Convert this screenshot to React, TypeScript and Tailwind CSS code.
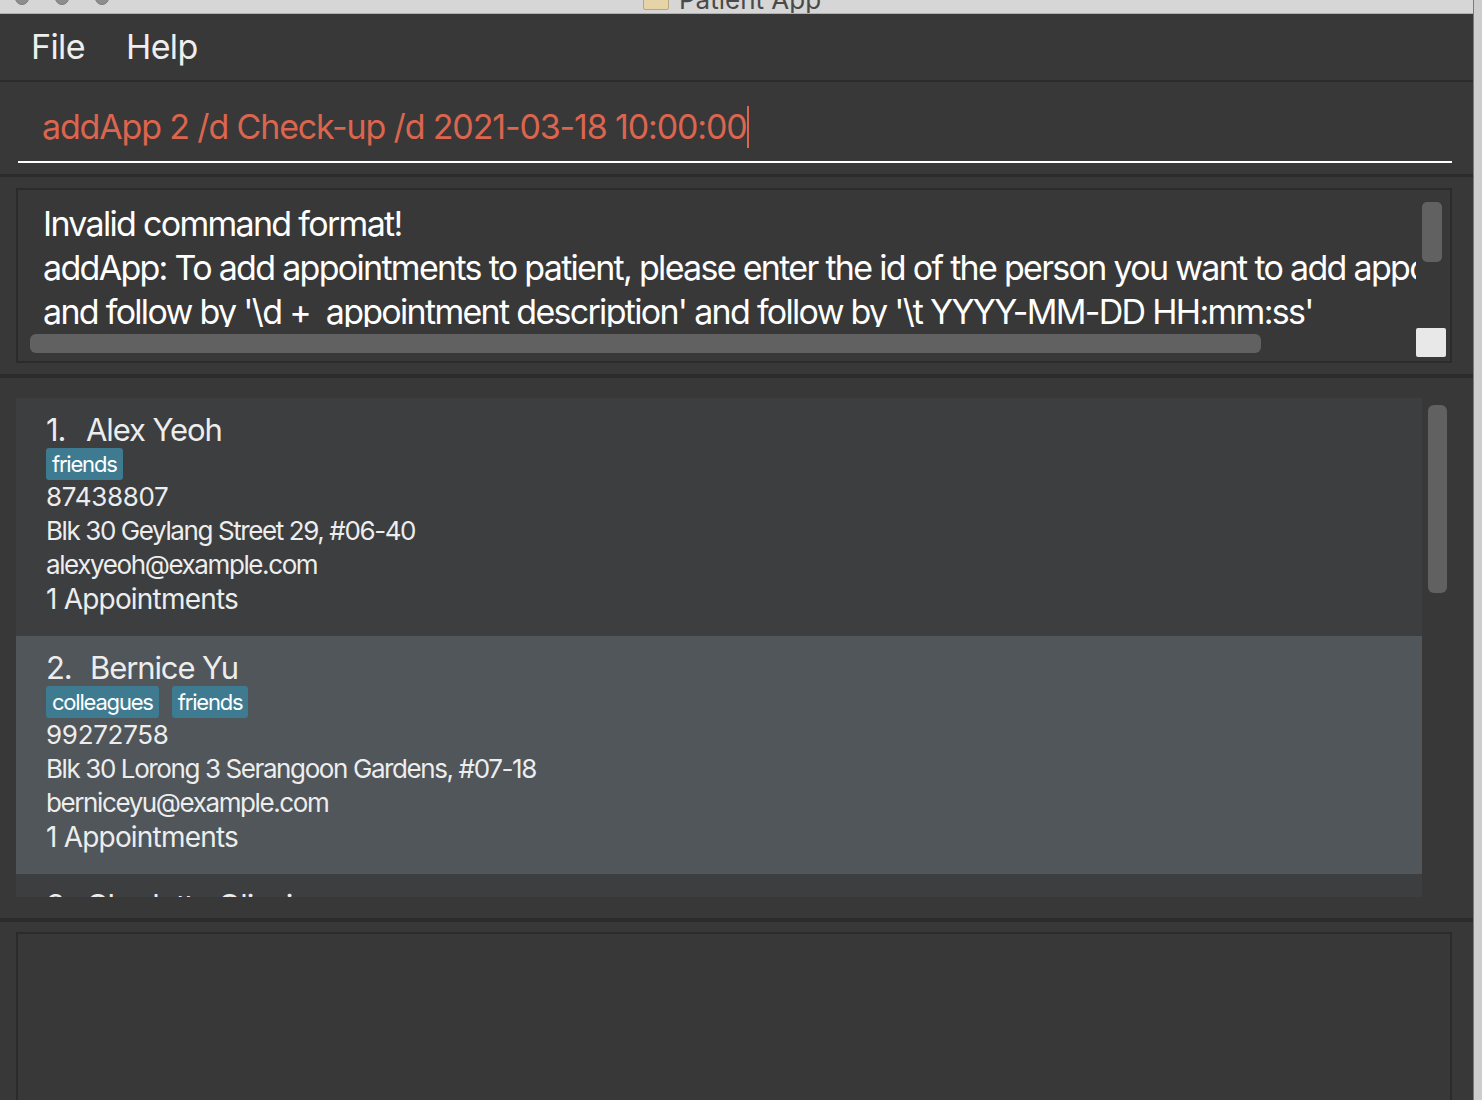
import React from "react";

type Person = {
  name: string;
  tags: string[];
  phone: string;
  address: string;
  email: string;
  appointments: number;
};

const people: Person[] = [
  {
    name: "Alex Yeoh",
    tags: ["friends"],
    phone: "87438807",
    address: "Blk 30 Geylang Street 29, #06-40",
    email: "alexyeoh@example.com",
    appointments: 1,
  },
  {
    name: "Bernice Yu",
    tags: ["colleagues", "friends"],
    phone: "99272758",
    address: "Blk 30 Lorong 3 Serangoon Gardens, #07-18",
    email: "berniceyu@example.com",
    appointments: 1,
  },
  {
    name: "Charlotte Oliveiro",
    tags: ["neighbours"],
    phone: "93210283",
    address: "Blk 11 Ang Mo Kio Street 74, #11-04",
    email: "charlotte@example.com",
    appointments: 0,
  },
];

const PersonCard: React.FC<{ person: Person; index: number; selected?: boolean }> = ({
  person,
  index,
  selected,
}) => {
  return (
    <div
      className={
        "shrink-0 h-[238px] pl-[30px] pt-[12px] text-[#ededed] " +
        (selected ? "bg-[#50565a] tracking-[-1.4px]" : "bg-[#3c3e40] tracking-[-1.4px]")
      }
    >
      <div className="h-[38px] flex items-center text-[31px] leading-none tracking-[-1.1px]">
        <span className={selected ? "w-[44px]" : "w-[40px]"}>{index}.</span>
        <span>{person.name}</span>
      </div>
      <div className="h-[32px] flex gap-[13px]">
        {person.tags.map((t) => (
          <span
            key={t}
            className="h-[32px] px-[6px] flex items-center rounded-[3px] bg-[#3e7b91] text-white text-[22px] tracking-[-1.2px]"
          >
            {t}
          </span>
        ))}
      </div>
      <div className="text-[26px] leading-[34px]">
        <div className="tracking-[-0.3px]">{person.phone}</div>
        <div>{person.address}</div>
        <div>{person.email}</div>
        <div className="text-[28px] leading-[35px] tracking-[-0.8px]">{person.appointments} Appointments</div>
      </div>
    </div>
  );
};

const App: React.FC = () => {
  return (
    <div
      className="w-[1482px] h-[1100px] flex bg-[#cdcdcd] overflow-hidden"
      style={{ fontFamily: "Inter, 'Noto Sans', sans-serif" }}
    >
      <div className="w-[1474px] h-full flex flex-col border-r border-[#7a7a7a] bg-[#383838]">
        {/* title bar, mostly cut off */}
        <div className="h-[14px] shrink-0 flex bg-[#d6d6d6] border-b border-[#b0b0b0] overflow-hidden">
          <div className="flex gap-[26px] pl-[15px] -mt-[9px]">
            <span className="w-[14px] h-[14px] rounded-full bg-[#8e8e8e] border border-[#7a7a7a]" />
            <span className="w-[14px] h-[14px] rounded-full bg-[#8e8e8e] border border-[#7a7a7a]" />
            <span className="w-[14px] h-[14px] rounded-full bg-[#8e8e8e] border border-[#7a7a7a]" />
          </div>
          <div className="ml-[534px] -mt-[13px] flex items-center gap-[10px]">
            <span className="w-[26px] h-[20px] rounded-[2px] bg-[#e6d3a8] border border-[#bba57a]" />
            <span className="text-[26px] text-[#4a4a4a] leading-none">Patient App</span>
          </div>
        </div>

        {/* menu bar */}
        <div className="h-[68px] shrink-0 flex items-center gap-[41px] pl-[31px] pb-[2px] text-[34px] text-[#eeeeee] tracking-[-0.6px] border-b-2 border-[#2b2b2b]">
          <span>File</span>
          <span>Help</span>
        </div>

        {/* command box */}
        <div className="h-[95px] shrink-0 pl-[18px] pr-[21px] border-b-[3px] border-[#2b2b2b]">
          <div className="h-[81px] flex items-center pl-[24px] pt-[10px] border-b-2 border-white text-[34px] text-[#db654e] tracking-[-1.15px]">
            <span>addApp 2 /d Check-up /d 2021-03-18 10:00:00</span>
            <span className="w-[2px] h-[42px] bg-[#db654e]" />
          </div>
        </div>

        {/* result display */}
        <div className="h-[201px] shrink-0 pl-[16px] pr-[21px] pt-[11px] border-b-[4px] border-[#2b2b2b]">
          <div className="h-[175px] flex flex-col border-2 border-[#2b2b2b]">
            <div className="h-[137px] flex">
              <div className="flex-1 overflow-hidden pl-[25px] pt-[12px] text-[34px] leading-[44px] text-white whitespace-nowrap tracking-[-1.7px]">
                <div>Invalid command format!</div>
                <div>
                  addApp: To add appointments to patient, please enter the id of the person you want to add appointments to
                </div>
                <div>and follow by '\d +&nbsp; appointment description' and follow by '\t YYYY-MM-DD HH:mm:ss'</div>
              </div>
              <div className="w-[34px] pl-[6px] pt-[12px]">
                <div className="w-[20px] h-[60px] rounded-[5px] bg-[#616161]" />
              </div>
            </div>
            <div className="h-[34px] flex">
              <div className="ml-[12px] mt-[7px] w-[1231px] h-[19px] rounded-[6px] bg-[#616161]" />
              <div className="flex-1" />
              <div className="mt-[1px] mr-[4px] w-[30px] h-[29px] rounded-[2px] bg-[#e8e8e8]" />
            </div>
          </div>
        </div>

        {/* person list */}
        <div className="h-[544px] shrink-0 pt-[20px] pl-[16px] pr-[21px] border-b-[4px] border-[#2b2b2b]">
          <div className="flex">
            <div className="w-[1406px] h-[499px] flex flex-col overflow-hidden bg-[#3c3e40]">
              {people.map((p, i) => (
                <PersonCard key={p.name} person={p} index={i + 1} selected={i === 1} />
              ))}
            </div>
            <div className="pl-[6px] pt-[7px]">
              <div className="w-[19px] h-[188px] rounded-[6px] bg-[#616161]" />
            </div>
          </div>
        </div>

        {/* status / empty panel */}
        <div className="flex-1 pl-[16px] pr-[21px] pt-[10px]">
          <div className="h-full border-2 border-b-0 border-[#2b2b2b]" />
        </div>
      </div>
    </div>
  );
};

export default App;
